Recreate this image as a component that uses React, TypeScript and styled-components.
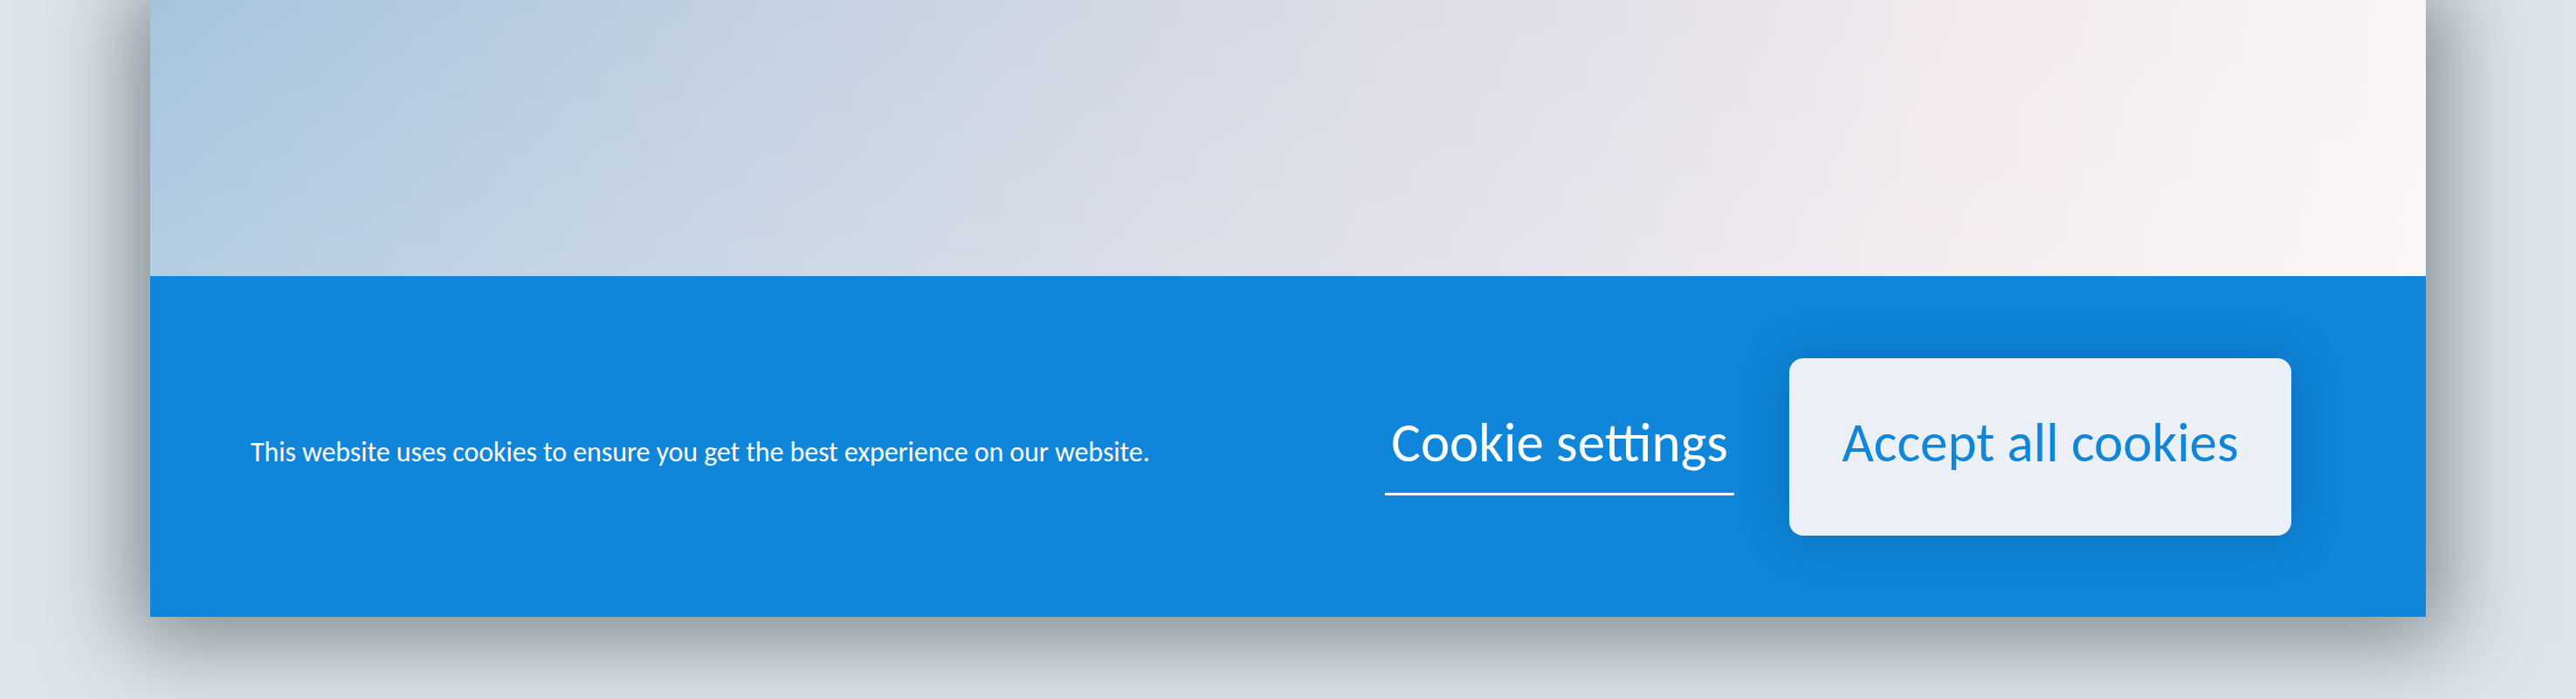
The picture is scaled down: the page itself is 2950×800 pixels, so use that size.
import styled, { createGlobalStyle } from 'styled-components';
import React from 'react';

const theme = {
    colors: {
        page: '#dbe5ea',
        banner: '#0f86da',
        buttonBg: '#ebf0f7',
        text: '#ffffff',
    },
    font: `Calibri, Carlito, Lato, "Open Sans", sans-serif`,
};

const GlobalStyle = createGlobalStyle`
    html, body {
        margin: 0;
        padding: 0;
        background: ${theme.colors.page};
        font-family: ${theme.font};
        overflow: hidden;
    }
`;

const Page = styled.div`
    width: 2950px;
    height: 800px;
    display: flex;
    justify-content: center;
    align-items: flex-start;
`;

const Card = styled.div`
    width: 2606px;
    display: flex;
    flex-direction: column;
    box-shadow: 0 6px 90px 22px rgba(45, 52, 60, 0.5);
`;

const Hero = styled.div`
    height: 316px;
    background:
        linear-gradient(180deg, rgba(255, 255, 255, 0) 0%, rgba(255, 255, 255, 0.14) 100%),
        linear-gradient(95deg, #a6c4dd 0%, #c1d0e1 25%, #d4d9e4 45%, #e2dfe8 62%, #f2eaee 80%, #f9f5f6 100%);
`;

const Banner = styled.div`
    height: 390px;
    background: ${theme.colors.banner};
    display: flex;
    align-items: center;
    padding: 0 154px 0 115px;
    box-sizing: border-box;
`;

const Message = styled.p`
    flex: 1;
    margin: 0;
    padding-top: 12px;
    color: ${theme.colors.text};
    font-size: 32px;
    letter-spacing: -0.1px;
`;

const Actions = styled.div`
    display: flex;
    align-items: center;
    gap: 63px;
`;

const LinkButton = styled.button`
    background: transparent;
    border: none;
    border-bottom: 3px solid ${theme.colors.text};
    color: ${theme.colors.text};
    font-family: ${theme.font};
    font-size: 63px;
    padding: 0 7px 19px;
    margin-top: 13px;
    cursor: pointer;
`;

const PrimaryButton = styled.button`
    width: 575px;
    height: 203px;
    border: none;
    border-radius: 16px;
    background: ${theme.colors.buttonBg};
    color: ${theme.colors.banner};
    font-family: ${theme.font};
    font-size: 63px;
    padding: 0 0 10px;
    box-shadow: 0 0 50px 6px rgba(10, 60, 120, 0.28);
    cursor: pointer;
`;

export default function App() {
    return (
        <Page>
            <GlobalStyle />
            <Card>
                <Hero />
                <Banner>
                    <Message>This website uses cookies to ensure you get the best experience on our website.</Message>
                    <Actions>
                        <LinkButton>Cookie settings</LinkButton>
                        <PrimaryButton>Accept all cookies</PrimaryButton>
                    </Actions>
                </Banner>
            </Card>
        </Page>
    );
}
